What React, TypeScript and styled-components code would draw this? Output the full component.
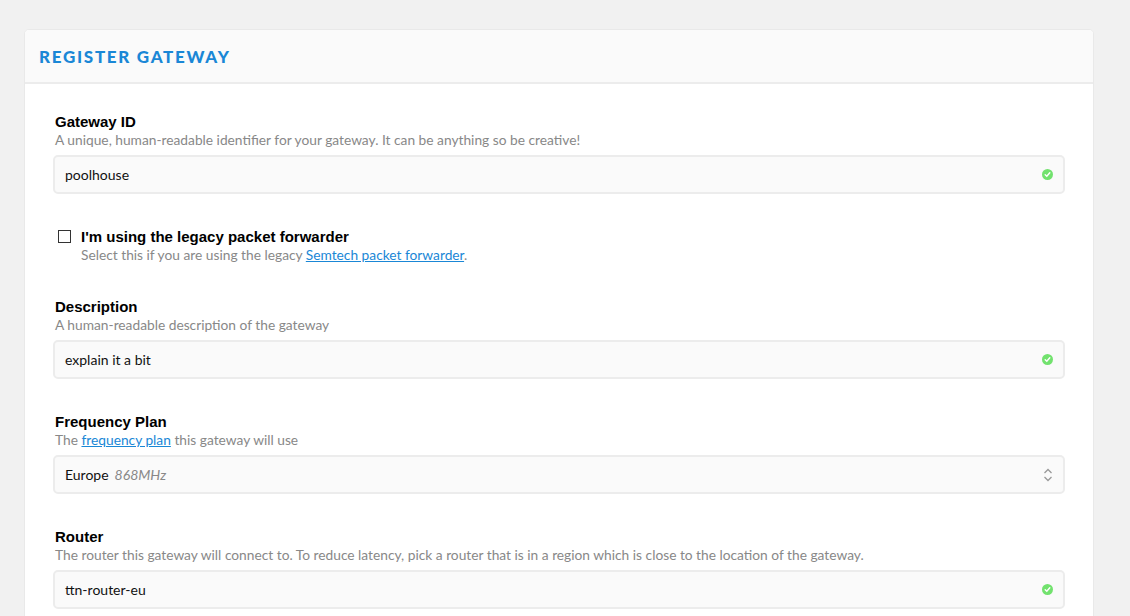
import React from 'react';
import styled, { createGlobalStyle } from 'styled-components';

const GlobalStyle = createGlobalStyle`
  html, body {
    margin: 0;
    padding: 0;
    background: #f1f1f1;
    font-family: Lato, "Liberation Sans", sans-serif;
  }
`;

const Page = styled.div`
  padding: 29px 36px 0 24px;
`;

const Card = styled.div`
  width: 1070px;
  box-sizing: border-box;
  background: #fff;
  border: 1px solid #e9e9e9;
  border-radius: 5px;
  overflow: hidden;
`;

const Header = styled.div`
  height: 52px;
  background: #fafafa;
  border-bottom: 2px solid #ececec;
  display: flex;
  align-items: center;
  padding: 0 14px;
`;

const Title = styled.h1`
  margin: 0;
  font-family: Lato, sans-serif;
  font-weight: 900;
  font-size: 17px;
  letter-spacing: 1.7px;
  color: #1a87d6;
  text-transform: uppercase;
`;

const Body = styled.form`
  padding: 29px 28px 20px;
  display: flex;
  flex-direction: column;
  gap: 34px;
`;

const Field = styled.div`
  display: flex;
  flex-direction: column;
`;

const Label = styled.label`
  padding-left: 2px;
  font-family: "Liberation Sans", Arial, sans-serif;
  font-weight: 700;
  font-size: 15px;
  line-height: 18px;
  color: #000;
`;

const Hint = styled.div`
  padding-left: 2px;
  font-family: Lato, sans-serif;
  font-size: 13.75px;
  line-height: 18px;
  color: #888;
`;

const HintLink = styled.a`
  color: #1a87d6;
  text-decoration: underline;
`;

const InputBox = styled.div`
  margin-top: 6px;
  height: 39px;
  box-sizing: border-box;
  background: #fafafa;
  border: 2px solid #ececec;
  border-radius: 5px;
  display: flex;
  align-items: center;
  padding: 0 10px 0 10px;
  font-family: Lato, sans-serif;
  font-size: 14px;
  color: #111;
`;

const Value = styled.span`
  flex: 1;
`;

const Unit = styled.em`
  color: #888;
  margin-left: 6px;
`;

const CheckRow = styled.div`
  display: flex;
  align-items: flex-start;
  gap: 8px;
  padding-left: 5px;
`;

const Box = styled.span`
  width: 11px;
  height: 11px;
  border: 1px solid #333;
  margin-top: 2px;
  flex: none;
`;

const ValidIcon = () => (
  <svg width="11" height="11" viewBox="0 0 11 11">
    <circle cx="5.5" cy="5.5" r="5.5" fill="#72e26e" />
    <path d="M3.2 5.8 L4.8 7.3 L7.8 3.8" stroke="#fff" strokeWidth="1.4" fill="none" strokeLinecap="round" />
  </svg>
);

const SelectIcon = () => (
  <svg width="10" height="14" viewBox="0 0 10 14">
    <path d="M1.5 5 L5 1.5 L8.5 5 M1.5 9 L5 12.5 L8.5 9" stroke="#999" strokeWidth="1.3" fill="none" />
  </svg>
);

type TextFieldProps = {
  label: string;
  hint: React.ReactNode;
  value: string;
};

const TextField = ({ label, hint, value }: TextFieldProps) => (
  <Field>
    <Label>{label}</Label>
    <Hint>{hint}</Hint>
    <InputBox>
      <Value>{value}</Value>
      <ValidIcon />
    </InputBox>
  </Field>
);

export default function App() {
  return (
    <Page>
      <GlobalStyle />
      <Card>
        <Header>
          <Title>Register Gateway</Title>
        </Header>
        <Body>
          <TextField
            label="Gateway ID"
            hint="A unique, human-readable identifier for your gateway. It can be anything so be creative!"
            value="poolhouse"
          />

          <CheckRow>
            <Box />
            <Field>
              <Label>I'm using the legacy packet forwarder</Label>
              <Hint>
                Select this if you are using the legacy <HintLink href="#">Semtech packet forwarder</HintLink>.
              </Hint>
            </Field>
          </CheckRow>

          <TextField
            label="Description"
            hint="A human-readable description of the gateway"
            value="explain it a bit"
          />

          <Field>
            <Label>Frequency Plan</Label>
            <Hint>
              The <HintLink href="#">frequency plan</HintLink> this gateway will use
            </Hint>
            <InputBox>
              <Value>
                Europe<Unit>868MHz</Unit>
              </Value>
              <SelectIcon />
            </InputBox>
          </Field>

          <TextField
            label="Router"
            hint="The router this gateway will connect to. To reduce latency, pick a router that is in a region which is close to the location of the gateway."
            value="ttn-router-eu"
          />
        </Body>
      </Card>
    </Page>
  );
}
